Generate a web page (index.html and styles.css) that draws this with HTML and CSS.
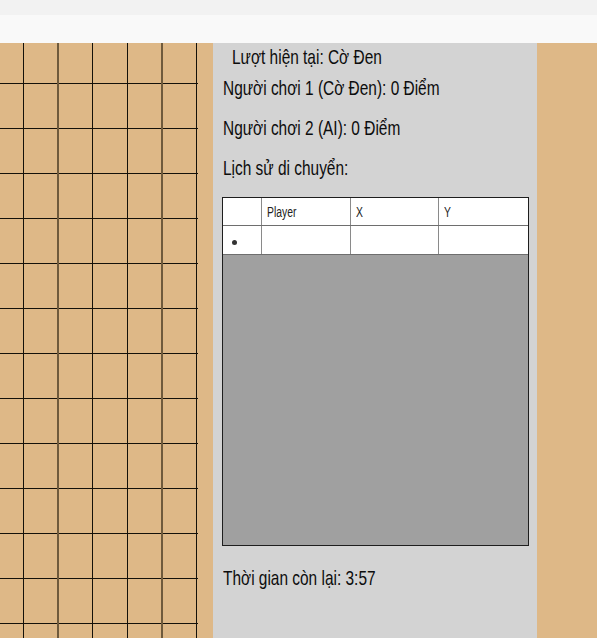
FILE: index.html
```html
<!DOCTYPE html>
<html lang="vi">
<head>
<meta charset="utf-8">
<title>Cờ</title>
<link rel="stylesheet" href="styles.css">
</head>
<body>
<header class="top">
  <div class="top-a"></div>
  <div class="top-b"></div>
</header>
<main class="main">
  <svg class="board" width="213" height="595" viewBox="0 0 213 595">
    <g fill="#14110a">
      <rect x="0" y="40" width="198" height="1"/>
      <rect x="0" y="85" width="198" height="1"/>
      <rect x="0" y="130" width="198" height="1"/>
      <rect x="0" y="175" width="198" height="1"/>
      <rect x="0" y="220" width="198" height="1"/>
      <rect x="0" y="265" width="198" height="1"/>
      <rect x="0" y="310" width="198" height="1"/>
      <rect x="0" y="355" width="198" height="1"/>
      <rect x="0" y="400" width="198" height="1"/>
      <rect x="0" y="445" width="198" height="1"/>
      <rect x="0" y="490" width="198" height="1"/>
      <rect x="0" y="535" width="198" height="1"/>
      <rect x="0" y="580" width="198" height="1"/>
      <rect x="23" y="0" width="1" height="595"/>
      <rect x="92" y="0" width="1" height="595"/>
      <rect x="127" y="0" width="1" height="595"/>
      <rect x="196" y="0" width="1" height="595"/>
    </g>
    <g fill="#6f5a3c">
      <rect x="57" y="0" width="2" height="595"/>
      <rect x="161" y="0" width="2" height="595"/>
    </g>
  </svg>
  <section class="panel">
    <div class="line turn"><span>Lượt hiện tại: Cờ Đen</span></div>
    <div class="line p1"><span>Người chơi 1 (Cờ Đen): 0 Điểm</span></div>
    <div class="line p2"><span>Người chơi 2 (AI): 0 Điểm</span></div>
    <div class="line hist"><span>Lịch sử di chuyển:</span></div>
    <div class="grid">
      <div class="row head">
        <div class="cell rh"></div>
        <div class="cell"><span>Player</span></div>
        <div class="cell"><span>X</span></div>
        <div class="cell"><span>Y</span></div>
      </div>
      <div class="row data">
        <div class="cell rh"><i class="dot"></i></div>
        <div class="cell"></div>
        <div class="cell"></div>
        <div class="cell"></div>
      </div>
    </div>
    <div class="line timer"><span>Thời gian còn lại: 3:57</span></div>
  </section>
  <div class="side"></div>
</main>
</body>
</html>
```

FILE: styles.css
```css
html, body {
  margin: 0;
  padding: 0;
}

body {
  width: 597px;
  height: 638px;
  overflow: hidden;
  font-family: "Liberation Sans", Arial, sans-serif;
  background: #d3d3d3;
}

.top-a {
  height: 15px;
  background: #f2f2f2;
}

.top-b {
  height: 28px;
  background: #f9f9f9;
}

.main {
  display: flex;
  height: 595px;
}

.board {
  display: block;
  flex: none;
  width: 213px;
  height: 595px;
  background: #deb887;
}

.panel {
  flex: none;
  width: 324px;
  box-sizing: border-box;
  padding-left: 9px;
  background: #d3d3d3;
}

.side {
  flex: 1;
  background: #deb887;
}

.line {
  height: 24px;
  line-height: 24px;
  font-size: 21px;
  color: #0d0d0d;
  padding-left: 1px;
  white-space: nowrap;
}

.line span {
  display: inline-block;
  transform: scaleX(0.735);
  transform-origin: 0 50%;
}

.turn {
  margin-top: 2px;
  padding-left: 10px;
}

.p1 {
  margin-top: 7px;
}

.p2 {
  margin-top: 16px;
}

.hist {
  margin-top: 16px;
}

.grid {
  margin-top: 17px;
  width: 307px;
  height: 349px;
  box-sizing: border-box;
  border: 1px solid #1e1e1e;
  background: #a0a0a0;
}

.row {
  display: grid;
  grid-template-columns: 39px 89px 88px 89px;
  box-sizing: border-box;
  border-bottom: 1px solid #6e6e6e;
  background: #fff;
}

.head {
  height: 28px;
}

.data {
  height: 29px;
}

.cell {
  box-sizing: border-box;
  border-right: 1px solid #8a8a8a;
  display: flex;
  align-items: center;
  padding-left: 5px;
  font-size: 14px;
  color: #222;
  white-space: nowrap;
}

.cell:last-child {
  border-right: none;
}

.cell span {
  display: inline-block;
  transform: scaleX(0.74);
  transform-origin: 0 50%;
}

.rh {
  padding-left: 9px;
}

.dot {
  display: block;
  width: 5px;
  height: 5px;
  margin-top: 4px;
  border-radius: 50%;
  background: #333;
}

.timer {
  margin-top: 20px;
}
```
